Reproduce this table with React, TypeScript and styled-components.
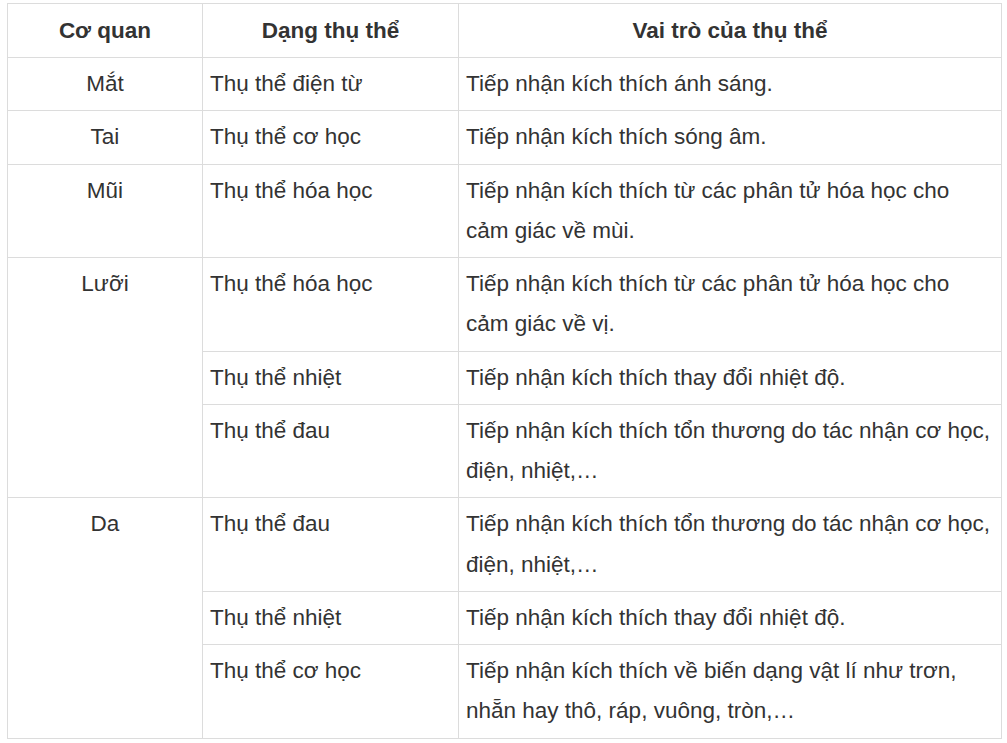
import React from 'react'
import styled, { createGlobalStyle } from 'styled-components'

const GlobalStyle = createGlobalStyle`
  html, body {
    margin: 0;
    padding: 0;
    background: #fff;
  }
  body {
    font-family: 'Liberation Sans', Arial, sans-serif;
    color: #333;
  }
`

interface Receptor {
  type: string
  role: string
}

interface Organ {
  name: string
  receptors: Receptor[]
}

const organs: Organ[] = [
  { name: 'Mắt', receptors: [{ type: 'Thụ thể điện từ', role: 'Tiếp nhận kích thích ánh sáng.' }] },
  { name: 'Tai', receptors: [{ type: 'Thụ thể cơ học', role: 'Tiếp nhận kích thích sóng âm.' }] },
  {
    name: 'Mũi',
    receptors: [
      { type: 'Thụ thể hóa học', role: 'Tiếp nhận kích thích từ các phân tử hóa học cho cảm giác về mùi.' }
    ]
  },
  {
    name: 'Lưỡi',
    receptors: [
      { type: 'Thụ thể hóa học', role: 'Tiếp nhận kích thích từ các phân tử hóa học cho cảm giác về vị.' },
      { type: 'Thụ thể nhiệt', role: 'Tiếp nhận kích thích thay đổi nhiệt độ.' },
      { type: 'Thụ thể đau', role: 'Tiếp nhận kích thích tổn thương do tác nhận cơ học, điện, nhiệt,…' }
    ]
  },
  {
    name: 'Da',
    receptors: [
      { type: 'Thụ thể đau', role: 'Tiếp nhận kích thích tổn thương do tác nhận cơ học, điện, nhiệt,…' },
      { type: 'Thụ thể nhiệt', role: 'Tiếp nhận kích thích thay đổi nhiệt độ.' },
      {
        type: 'Thụ thể cơ học',
        role: 'Tiếp nhận kích thích về biến dạng vật lí như trơn, nhẵn hay thô, ráp, vuông, tròn,…'
      }
    ]
  }
]

const App: React.FC = () => {
  return (
    <>
      <GlobalStyle />
      <Wrapper>
        <Table>
          <colgroup>
            <col style={{ width: 195 }} />
            <col style={{ width: 256 }} />
            <col />
          </colgroup>
          <thead>
            <tr>
              <HeadCell>Cơ quan</HeadCell>
              <HeadCell>Dạng thụ thể</HeadCell>
              <HeadCell>Vai trò của thụ thể</HeadCell>
            </tr>
          </thead>
          <tbody>
            {organs.map((organ) =>
              organ.receptors.map((r, i) => (
                <tr key={organ.name + i}>
                  {i === 0 && (
                    <Cell $center rowSpan={organ.receptors.length}>
                      {organ.name}
                    </Cell>
                  )}
                  <Cell>{r.type}</Cell>
                  <Cell>{r.role}</Cell>
                </tr>
              ))
            )}
          </tbody>
        </Table>
      </Wrapper>
    </>
  )
}

const Wrapper = styled.div`
  padding: 3px 6px 0 7px;
`

const Table = styled.table`
  width: 995px;
  border-collapse: collapse;
  table-layout: fixed;
  font-size: 22.5px;
`

const HeadCell = styled.th`
  border: 1px solid #dcdcdc;
  padding: 6px 7px;
  height: 54px;
  box-sizing: border-box;
  font-weight: bold;
  text-align: center;
  vertical-align: middle;
  color: #333;
`

const Cell = styled.td<{ $center?: boolean }>`
  border: 1px solid #dcdcdc;
  padding: 6px 7px;
  line-height: 40.25px;
  vertical-align: top;
  text-align: ${(p) => (p.$center ? 'center' : 'left')};
  color: #333;
`

export default App
